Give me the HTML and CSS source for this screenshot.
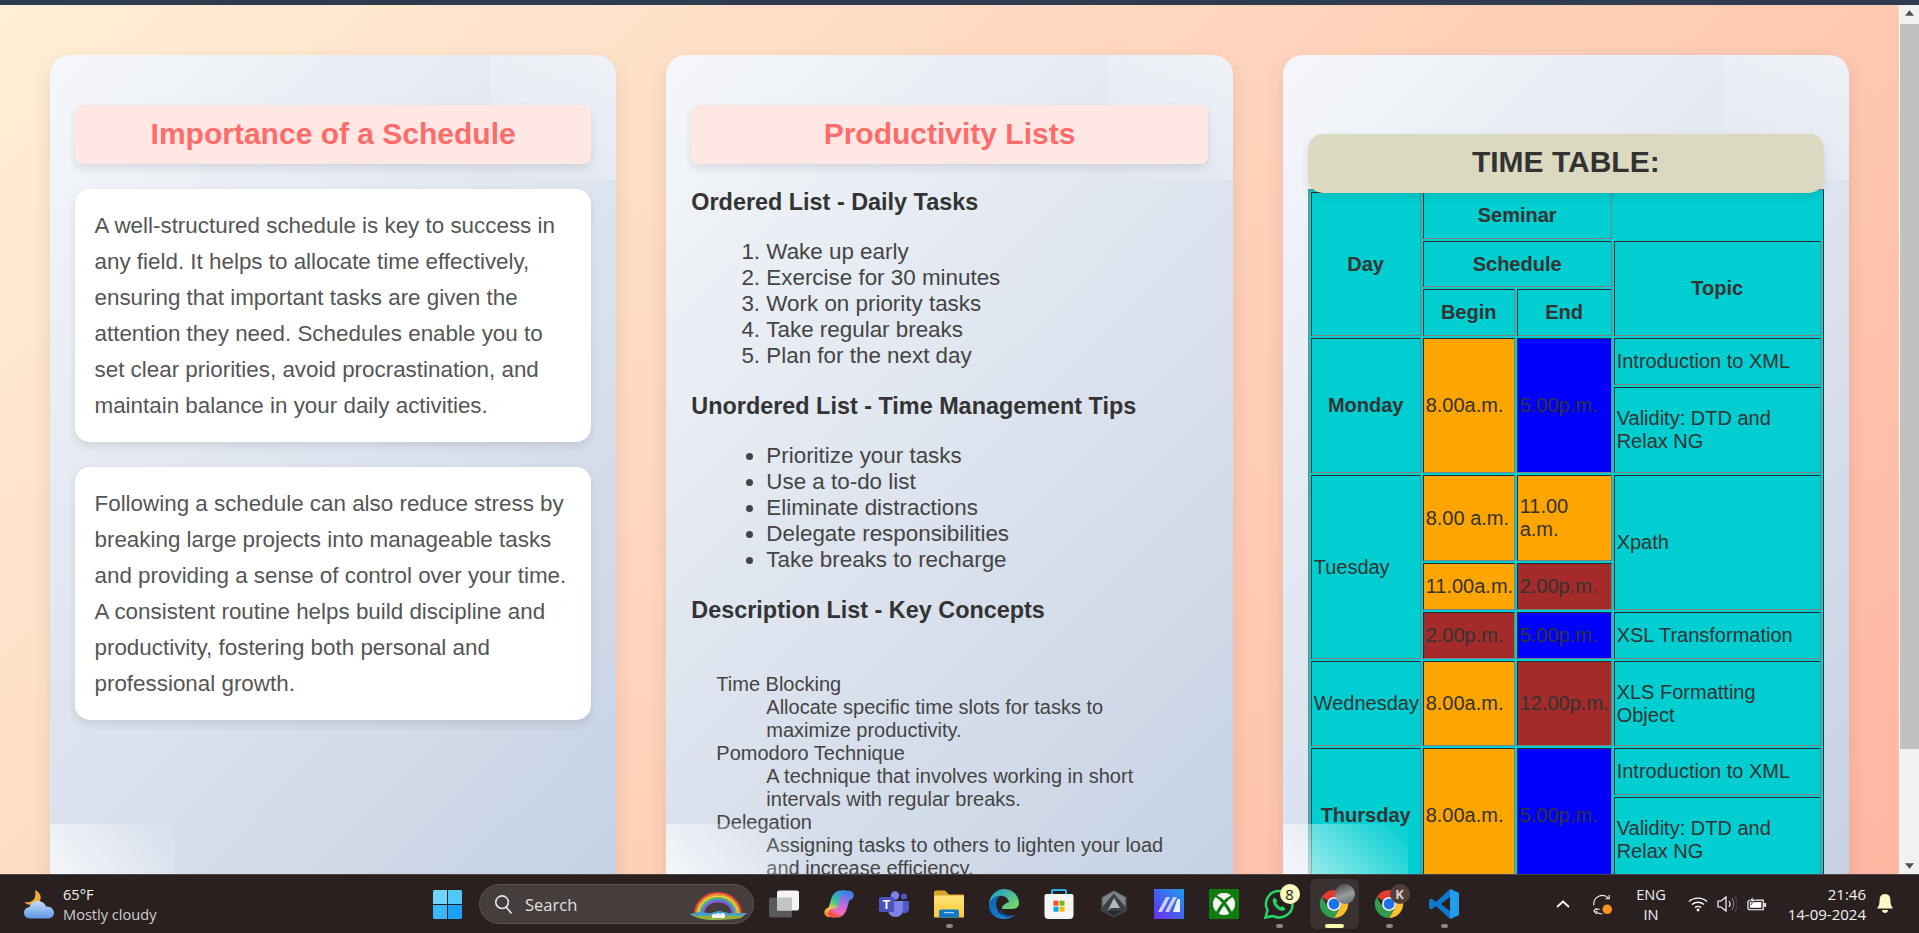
FILE: index.html
```html
<!DOCTYPE html>
<html lang="en">
<head>
    <meta charset="UTF-8">
    <meta name="viewport" content="width=device-width, initial-scale=1.0">
    <title>Schedule</title>
    <link rel="stylesheet" href="styles.css">
</head>
<body>
    <div class="top-bar"></div>

    <div class="window">
        <main class="page">
            <!-- Importance -->
            <section class="card">
                <h2 class="card-title">Importance of a Schedule</h2>
                <p class="note">A well-structured schedule is key to success in any field. It helps to allocate time effectively, ensuring that important tasks are given the attention they need. Schedules enable you to set clear priorities, avoid procrastination, and maintain balance in your daily activities.</p>
                <p class="note">Following a schedule can also reduce stress by breaking large projects into manageable tasks and providing a sense of control over your time. A consistent routine helps build discipline and productivity, fostering both personal and professional growth.</p>
            </section>

            <!-- Lists -->
            <section class="card">
                <h2 class="card-title">Productivity Lists</h2>
                <h3 class="list-title">Ordered List - Daily Tasks</h3>
                <ol class="list">
                    <li>Wake up early</li>
                    <li>Exercise for 30 minutes</li>
                    <li>Work on priority tasks</li>
                    <li>Take regular breaks</li>
                    <li>Plan for the next day</li>
                </ol>
                <h3 class="list-title">Unordered List - Time Management Tips</h3>
                <ul class="list">
                    <li>Prioritize your tasks</li>
                    <li>Use a to-do list</li>
                    <li>Eliminate distractions</li>
                    <li>Delegate responsibilities</li>
                    <li>Take breaks to recharge</li>
                </ul>
                <h3 class="list-title">Description List - Key Concepts</h3>
                <dl class="terms">
                    <dt>Time Blocking</dt>
                    <dd>Allocate specific time slots for tasks to maximize productivity.</dd>
                    <dt>Pomodoro Technique</dt>
                    <dd>A technique that involves working in short intervals with regular breaks.</dd>
                    <dt>Delegation</dt>
                    <dd>Assigning tasks to others to lighten your load and increase efficiency.</dd>
                </dl>
            </section>

            <!-- Time table -->
            <section class="card card-table">
                <h2 class="table-title">TIME TABLE:</h2>
                <table class="timetable">
                    <colgroup>
                        <col class="col-day">
                        <col class="col-begin">
                        <col class="col-end">
                        <col class="col-topic">
                    </colgroup>
                    <tr class="row-s">
                        <th rowspan="3">Day</th>
                        <th colspan="2">Seminar</th>
                        <td class="blank"></td>
                    </tr>
                    <tr class="row-xs">
                        <th colspan="2">Schedule</th>
                        <th rowspan="2">Topic</th>
                    </tr>
                    <tr class="row-s">
                        <th>Begin</th>
                        <th>End</th>
                    </tr>
                    <tr class="row-s">
                        <th rowspan="2">Monday</th>
                        <td rowspan="2" class="orange">8.00a.m.</td>
                        <td rowspan="2" class="blue">5.00p.m.</td>
                        <td>Introduction to XML</td>
                    </tr>
                    <tr class="row-l">
                        <td>Validity: DTD and Relax NG</td>
                    </tr>
                    <tr class="row-l">
                        <td rowspan="3">Tuesday</td>
                        <td class="orange">8.00 a.m.</td>
                        <td class="orange">11.00 a.m.</td>
                        <td rowspan="2">Xpath</td>
                    </tr>
                    <tr class="row-s">
                        <td class="orange">11.00a.m.</td>
                        <td class="brown">2.00p.m.</td>
                    </tr>
                    <tr class="row-s">
                        <td class="brown">2.00p.m.</td>
                        <td class="blue">5.00p.m.</td>
                        <td>XSL Transformation</td>
                    </tr>
                    <tr class="row-m">
                        <td>Wednesday</td>
                        <td class="orange">8.00a.m.</td>
                        <td class="brown">12.00p.m.</td>
                        <td>XLS Formatting Object</td>
                    </tr>
                    <tr class="row-s">
                        <th rowspan="2">Thursday</th>
                        <td rowspan="2" class="orange">8.00a.m.</td>
                        <td rowspan="2" class="blue">5.00p.m.</td>
                        <td>Introduction to XML</td>
                    </tr>
                    <tr class="row-l">
                        <td>Validity: DTD and Relax NG</td>
                    </tr>
                </table>
            </section>
        </main>

        <!-- Scrollbar -->
        <div class="scrollbar">
            <svg class="arrow" viewBox="0 0 10 6"><path d="M5 0 10 6H0Z"/></svg>
            <div class="thumb"></div>
            <svg class="arrow arrow-down" viewBox="0 0 10 6"><path d="M0 0H10L5 6Z"/></svg>
        </div>
    </div>

    <!-- Taskbar -->
    <footer class="taskbar">
        <div class="weather">
            <svg class="weather-icon" viewBox="0 0 30 29">
                <path d="M11 0C18 3 19 11 12 14 8 15.500 3 15 0 12 5 13 10 11 11 7 11.500 4 11.500 2 11 0Z" fill="#f2a93b"/>
                <path d="M6 28.500C2 28.500 0 25.500 0 23 0 20 2 17.500 5.500 17 7 12 13 9.500 18 12 20 13 21.500 14.500 22 16.500 26.500 16 30 19 30 23 30 26 27.500 28.500 24 28.500Z" fill="url(#cloud)"/>
            </svg>
            <div class="weather-text">
                <span>65°F</span>
                <span>Mostly cloudy</span>
            </div>
        </div>

        <svg class="start" viewBox="0 0 29 29">
            <path d="M0 1.500Q0 0 1.500 0H14V14H0Z" fill="#6fd6fb"/>
            <path d="M15 0H27.500Q29 0 29 1.500V14H15Z" fill="#52c8fa"/>
            <path d="M0 15H14V29H1.500Q0 29 0 27.500Z" fill="#3bb6f8"/>
            <path d="M15 15H29V27.500Q29 29 27.500 29H15Z" fill="#1ba1f5"/>
        </svg>

        <div class="search">
            <svg class="search-icon" viewBox="0 0 20 22" fill="none" stroke="#e8e8e8" stroke-width="1.800">
                <circle cx="9" cy="9" r="7"/>
                <path d="M14 15l5 6" stroke-linecap="round"/>
            </svg>
            <span>Search</span>
            <svg class="rainbow" viewBox="0 0 58 32" fill="none" stroke-width="1.800">
                <path d="M5 26A23 21 0 0 1 51 26" stroke="#e8443a"/>
                <path d="M6.700 26A21.300 19.300 0 0 1 49.300 26" stroke="#f59a2e"/>
                <path d="M8.400 26A19.600 17.600 0 0 1 47.600 26" stroke="#f4d84a"/>
                <path d="M10.100 26A17.900 15.900 0 0 1 45.900 26" stroke="#62c456"/>
                <path d="M11.800 26A16.200 14.200 0 0 1 44.200 26" stroke="#4a8fe8"/>
                <path d="M13.500 26A14.500 12.500 0 0 1 42.500 26" stroke="#8f55d8"/>
                <path d="M0 26 10 24 20 25.500 29 23 40 25.500 57 25 51 30Q40 32 20 32 6 31 0 26Z" fill="#8eb03c" stroke="none"/>
                <path d="M0 26 10 24 20 25.500 29 23 40 25.500 57 25 54 27.500H3Z" fill="#3f9be0" stroke="none"/>
                <path d="M22 29a2 2 0 0 1 4-2 2 2 0 0 1 4 0 2 2 0 0 1 5 1 2 2 0 0 1-3 2h-8a1.500 1.500 0 0 1-2-1Z" fill="#f4f4f4" stroke="none"/>
            </svg>
        </div>

        <div class="apps">
            <!-- Task view -->
            <div class="app">
                <svg viewBox="0 0 30 27">
                    <rect x="0" y="7" width="23" height="20" rx="2" fill="#595959"/>
                    <rect x="8" y="0" width="22" height="20" rx="2" fill="#f4f4f4"/>
                    <rect x="8" y="7" width="15" height="13" fill="#c4c4c4"/>
                </svg>
            </div>
            <!-- Copilot -->
            <div class="app">
                <svg viewBox="0 0 30 28" fill="none" stroke-width="9.500" stroke-linecap="round">
                    <path d="M5 22.500C8 22.500 9 20 10 16.500L11.500 11C12.500 7 14.500 5 18 5H21" stroke="url(#copilot-a)"/>
                    <path d="M25 5.500C22 5.500 21 8 20 11.500L18.500 17C17.500 21 15.500 23 12 23H9" stroke="url(#copilot-b)"/>
                </svg>
            </div>
            <!-- Teams -->
            <div class="app">
                <svg viewBox="0 0 30 26">
                    <circle cx="16" cy="4.500" r="4.200" fill="#7b83eb"/>
                    <circle cx="25" cy="5.500" r="3" fill="#5059c9"/>
                    <path d="M21 10H29Q30 10 30 11V17C30 21 27 23 24 22Z" fill="#5059c9"/>
                    <path d="M9 10H24V19C24 23 21 26 16.500 26S9 23 9 19Z" fill="#7b83eb"/>
                    <rect x="0" y="6" width="15" height="15" rx="1.500" fill="#4b53bc"/>
                    <text x="7.500" y="18" class="teams-t">T</text>
                </svg>
            </div>
            <!-- Files -->
            <div class="app app-on">
                <svg viewBox="0 0 30 27">
                    <path d="M0 2Q0 0 2 0H11L15 4H29Q30 4 30 5V8H0Z" fill="#d9a227"/>
                    <rect x="0" y="5" width="30" height="22" rx="1" fill="url(#folder)"/>
                    <path d="M7 19H23Q25 19 25 21V27H5V21Q5 19 7 19Z" fill="#0f78c8"/>
                    <rect x="10" y="21.500" width="10" height="1.200" fill="#9fd5f5"/>
                </svg>
            </div>
            <!-- Edge -->
            <div class="app">
                <svg viewBox="0 0 30 30">
                    <path d="M15 0C24 0 30 7 30 14 30 19 26 20 22 20H13C13 16 17 14 20 13 19 8 14 6 10 7 5 8 1 12 0 16 0 7 7 0 15 0Z" fill="url(#edge-a)"/>
                    <path d="M0 16C1 10 6 7 11 7 7 10 6 15 8 20 10 26 17 29 23 27L26 26C22 29 18 30 15 30 6 30 0 24 0 16Z" fill="url(#edge-b)"/>
                    <path d="M12 20C13 25 18 27 24 26 20 29 16 28 13.500 26 11.500 24 11 22 12 20Z" fill="#0c4f95"/>
                </svg>
            </div>
            <!-- Store -->
            <div class="app">
                <svg viewBox="0 0 29 30">
                    <path d="M7.500 6V1.500Q7.500 1 8.500 1H20.500Q21.500 1 21.500 1.500V6" fill="none" stroke="#2fb0ee" stroke-width="2"/>
                    <path d="M2 5H27Q29 5 29 7V26Q29 30 25 30H4Q0 30 0 26V7Q0 5 2 5Z" fill="#f5f5f5"/>
                    <rect x="9" y="11.700" width="5" height="5" fill="#f25022"/>
                    <rect x="15" y="11.700" width="5" height="5" fill="#7fba00"/>
                    <rect x="9" y="17.700" width="5" height="5" fill="#00a4ef"/>
                    <rect x="15" y="17.700" width="5" height="5" fill="#ffb900"/>
                </svg>
            </div>
            <!-- Hexagon app -->
            <div class="app">
                <svg class="hex" viewBox="0 0 26 28">
                    <path d="M13 0 26 7V21L13 28 0 21V7Z" fill="#3c4044"/>
                    <path d="M13 1 24.500 7.500V17L13 3.500 1.500 17V7.500Z" fill="#80858a"/>
                    <path d="M13 8 19 18H10L6.500 21Z" fill="#b5b8bb"/>
                    <path d="M6.500 21H20L13 25.500Z" fill="#26292c"/>
                </svg>
            </div>
            <!-- Blue M app -->
            <div class="app">
                <svg viewBox="0 0 30 30">
                    <rect width="30" height="30" fill="url(#mapp)"/>
                    <path d="M4 23 12 8H16L8 23ZM11 23 19 8H23L15 23Z" fill="#fff" fill-opacity=".7"/>
                    <path d="M19 23 23.500 10H26V23Z" fill="#fff" fill-opacity=".9"/>
                </svg>
            </div>
            <!-- Xbox -->
            <div class="app">
                <svg viewBox="0 0 30 30">
                    <rect width="30" height="30" rx="1" fill="#107c10"/>
                    <circle cx="15" cy="15" r="11" fill="#f6f6f6"/>
                    <path d="M6 6C11 8 18 17 23 26M24 6C19 8 12 17 7 26" fill="none" stroke="#107c10" stroke-width="3.200"/>
                    <path d="M8 6.500C12 8.500 14 10 15 11.500 16 10 18 8.500 22 6.500 18 3 12 3 8 6.500Z" fill="#f6f6f6"/>
                </svg>
            </div>
            <!-- WhatsApp -->
            <div class="app app-on">
                <svg viewBox="0 0 30 30" fill="none">
                    <path d="M1.500 28.500 3.500 21C-1 12.500 5 2 15 2 22.500 2 28.500 8 28.500 15.500 28.500 25.500 17.500 31.500 9 27Z" stroke="#25d366" stroke-width="2.600"/>
                    <path d="M10.500 8.500C7.500 10.500 8.500 14.500 12 18.500 16 22 19.500 23 21.500 20L18.500 17 16.500 18.200C15 17.500 13 15.500 12.300 13.800L13.500 12Z" fill="#25d366"/>
                </svg>
                <span class="badge badge-count">8</span>
            </div>
            <!-- Chrome -->
            <div class="app app-active">
                <svg viewBox="0 0 32 32"><use href="#chrome"/></svg>
                <span class="badge badge-photo"></span>
            </div>
            <div class="app app-on">
                <svg viewBox="0 0 32 32"><use href="#chrome"/></svg>
                <span class="badge badge-k">K</span>
            </div>
            <!-- VS Code -->
            <div class="app app-on">
                <svg viewBox="0 0 30 30">
                    <path d="M21 0 30 4V26L21 30 7 17 2.500 20.500 0 19V11L2.500 9.500 7 13Z" fill="#0e78c5"/>
                    <path d="M21 8 12 15 21 22Z" fill="#2a2020"/>
                    <path d="M21 0 30 4V26L21 30Z" fill="#1f9cf0"/>
                </svg>
            </div>
        </div>

        <div class="tray">
            <svg class="chevron" viewBox="0 0 14 8" fill="none" stroke="#fff" stroke-width="1.800"><path d="M1 7 7 1.500 13 7"/></svg>
            <svg class="sync" viewBox="0 0 22 22" fill="none" stroke="#eee" stroke-width="1.200">
                <path d="M2 12A9 9 0 0 1 17 4"/>
                <path d="M18 1V5H14"/>
                <path d="M3 16H8"/>
                <path d="M5 21 2 17.500 5 15"/>
                <path d="M4 18A9 9 0 0 0 11 21"/>
                <circle cx="16" cy="16" r="5" fill="#f7931e" stroke="none"/>
            </svg>
            <div class="lang"><span>ENG</span><span>IN</span></div>
            <svg class="wifi" viewBox="0 0 20 16" fill="none" stroke="#fff" stroke-width="1.400">
                <path d="M1 5.500C6 1 14 1 19 5.500"/>
                <path d="M4 8.500C7.500 5.500 12.500 5.500 16 8.500"/>
                <path d="M7 11.500C8.500 10 11.500 10 13 11.500"/>
                <circle cx="10" cy="14" r="1.400" fill="#fff" stroke="none"/>
            </svg>
            <svg class="volume" viewBox="0 0 20 18" fill="none" stroke="#fff" stroke-width="1.200">
                <path d="M1 6V12H4L9 16V2L4 6Z"/>
                <path d="M12 6C13.500 8 13.500 10 12 12"/>
                <path d="M15 3C17.500 7 17.500 11 15 15" stroke="#777"/>
                <path d="M18 1C20.500 6 20.500 12 18 17" stroke="#444"/>
            </svg>
            <svg class="battery" viewBox="0 0 22 16">
                <path d="M4 4H17V14H3Q1 14 1 12V6Q1 4 4 4Z" fill="none" stroke="#fff" stroke-width="1.200"/>
                <rect x="3" y="6" width="12" height="6" fill="#fff"/>
                <rect x="18" y="7" width="2" height="4" fill="#fff"/>
                <path d="M6 0 3 5H6L4 9 9 3H6Z" fill="#fff" stroke="#2a2020" stroke-width=".6"/>
            </svg>
            <div class="clock"><span>21:46</span><span>14-09-2024</span></div>
            <svg class="bell" viewBox="0 0 16 20">
                <path d="M8 0C3 0 2.500 4 2.500 8 2.500 11 1 13 0 14.500H16C15 13 13.500 11 13.500 8 13.500 4 13 0 8 0Z" fill="#fbf8c8"/>
                <path d="M5 16H11C11 20 5 20 5 16Z" fill="#fbf8c8"/>
            </svg>
        </div>
    </footer>

    <!-- Shared gradients and the chrome icon -->
    <svg class="defs" width="0" height="0">
        <defs>
            <linearGradient id="cloud" x1="0" y1="0" x2="0" y2="1">
                <stop offset="0" stop-color="#c4def8"/>
                <stop offset="1" stop-color="#5f97e6"/>
            </linearGradient>
            <linearGradient id="folder" x1="0" y1="0" x2="0" y2="1">
                <stop offset="0" stop-color="#fde27a"/>
                <stop offset="1" stop-color="#fbc833"/>
            </linearGradient>
            <linearGradient id="copilot-a" gradientUnits="userSpaceOnUse" x1="18" y1="2" x2="6" y2="26">
                <stop offset="0" stop-color="#2f8fe8"/>
                <stop offset=".45" stop-color="#3fc48a"/>
                <stop offset=".75" stop-color="#f2d648"/>
                <stop offset="1" stop-color="#f0843c"/>
            </linearGradient>
            <linearGradient id="copilot-b" gradientUnits="userSpaceOnUse" x1="24" y1="2" x2="10" y2="26">
                <stop offset="0" stop-color="#3a7fe8"/>
                <stop offset=".45" stop-color="#b46ae6"/>
                <stop offset=".8" stop-color="#f06cb8"/>
                <stop offset="1" stop-color="#f0503c"/>
            </linearGradient>
            <linearGradient id="edge-a" x1="0" y1="0" x2="1" y2="1">
                <stop offset="0" stop-color="#1a9ad8"/>
                <stop offset="1" stop-color="#7fdc5c"/>
            </linearGradient>
            <linearGradient id="edge-b" x1="0" y1="0" x2="1" y2="1">
                <stop offset="0" stop-color="#0b5cad"/>
                <stop offset="1" stop-color="#1b8fe0"/>
            </linearGradient>
            <linearGradient id="mapp" x1="1" y1="0" x2="0" y2="1">
                <stop offset="0" stop-color="#1a9cf0"/>
                <stop offset="1" stop-color="#6a2cf0"/>
            </linearGradient>
            <symbol id="chrome" viewBox="0 0 32 32">
                <path d="M3 8.500A15 15 0 0 1 29 8.500H16A7.500 7.500 0 0 0 9.500 12.250Z" fill="#e33b2e"/>
                <path d="M29 8.500A15 15 0 0 1 16 31L22.500 19.750A7.500 7.500 0 0 0 16 8.500Z" fill="#fbc02d"/>
                <path d="M16 31A15 15 0 0 1 3 8.500L9.500 19.750A7.500 7.500 0 0 0 22.500 19.750Z" fill="#2e9e4f"/>
                <circle cx="16" cy="16" r="7.500" fill="#fff"/>
                <circle cx="16" cy="16" r="5.800" fill="#1a73e8"/>
            </symbol>
        </defs>
    </svg>
</body>
</html>
```

FILE: styles.css
```css
* {
    box-sizing: border-box;
}

html, body {
    margin: 0;
    height: 100%;
}

body {
    display: flex;
    flex-direction: column;
    overflow: hidden;
    font-family: "Liberation Sans", Arial, sans-serif;
    color: #333;
}

.top-bar {
    height: 5px;
    background-color: #2f3b4e;
    flex: none;
}

.window {
    display: flex;
    flex: 1;
    min-height: 0;
}

.page {
    flex: 1;
    min-width: 0;
    display: grid;
    grid-template-columns: repeat(3, 1fr);
    gap: 50px;
    align-items: start;
    padding: 50px;
    overflow: hidden;
    background: linear-gradient(135deg, #ffefd5, #ffb6a0);
}

/* Cards */
.card {
    position: relative;
    height: 894px;
    padding: 50px 25px 25px;
    border-radius: 20px;
    background: linear-gradient(135deg, #f5f7fa, #c3cfe2);
    box-shadow: 0 8px 20px rgba(0, 0, 0, 0.1);
    overflow: hidden;
}

.card::before,
.card::after {
    content: "";
    position: absolute;
    width: 125px;
    height: 125px;
    pointer-events: none;
}

.card::before {
    top: 0;
    right: 0;
    background: linear-gradient(225deg, rgba(255, 255, 255, 0.45), rgba(255, 255, 255, 0));
}

.card::after {
    bottom: 0;
    left: 0;
    z-index: 3;
    background: linear-gradient(45deg, rgba(255, 255, 255, 1), rgba(255, 255, 255, 0));
}

.card-title {
    position: relative;
    margin: 0 0 25px;
    padding: 12px 10px 14px;
    font-size: 30px;
    line-height: 33px;
    text-align: center;
    color: #ff6b6b;
    background-color: #ffe8e3;
    border-radius: 8px;
    box-shadow: 0 4px 10px rgba(0, 0, 0, 0.1);
}

.note {
    margin: 0 0 25px;
    padding: 18.5px 20px 18.5px 19.5px;
    font-size: 22.4px;
    line-height: 36px;
    color: #555;
    background-color: #fff;
    border-radius: 15px;
    box-shadow: 0 4px 10px rgba(0, 0, 0, 0.1);
}

/* Lists */
.list-title {
    margin: 0 0 23px;
    font-size: 23.4px;
    line-height: 27px;
    color: #333;
}

.list {
    margin: 0 0 24px;
    padding-left: 75px;
    font-size: 22.4px;
    color: #444;
}

.terms {
    margin: 49px 25px 0;
    font-size: 20px;
    color: #444;
}

.terms dd {
    margin-left: 50px;
}

/* Time table */
.card-table {
    padding-top: 79px;
}

.table-title {
    position: relative;
    z-index: 2;
    margin: 0 0 -4px;
    padding: 12px 10px 16px;
    font-size: 30px;
    line-height: 31px;
    text-align: center;
    background-color: #dbd9bf;
    border-radius: 15px;
    box-shadow: 0 4px 10px rgba(0, 0, 0, 0.1);
}

.timetable {
    position: relative;
    width: 516px;
    table-layout: fixed;
    border-collapse: separate;
    border-spacing: 2px;
    border: 1px outset #808080;
    background-color: #00ced1;
    font-size: 20px;
}

.col-day { width: 110px; }
.col-begin { width: 92px; }
.col-end { width: 95px; }
.col-topic { width: auto; }

.timetable th,
.timetable td {
    padding: 2px;
    border: 1px inset #808080;
    background-color: #00ced1;
}

.timetable td.blank {
    border: none;
}

.row-xs { height: 46px; }
.row-s { height: 47px; }
.row-m { height: 85px; }
.row-l { height: 86px; }

.timetable td.orange { background-color: orange; }
.timetable td.blue { background-color: blue; }
.timetable td.brown { background-color: brown; }

/* Scrollbar */
.scrollbar {
    display: flex;
    flex-direction: column;
    align-items: center;
    width: 20px;
    flex: none;
    padding: 5px 0;
    background-color: #f1f1f1;
    border-left: 1px solid #fff;
}

.arrow {
    width: 9px;
    height: 6px;
    flex: none;
    fill: #505050;
}

.thumb {
    width: 100%;
    height: 725px;
    margin-top: 8px;
    background-color: #c1c1c1;
}

.arrow-down {
    margin-top: auto;
}

/* Taskbar */
.taskbar {
    display: flex;
    align-items: center;
    height: 59px;
    flex: none;
    padding-left: 24px;
    background-color: #2a2020;
    border-top: 1px solid #4a4444;
    color: #f2f2f2;
    font-family: "Open Sans", sans-serif;
}

.weather {
    display: flex;
    align-items: center;
    gap: 9px;
    width: 409px;
    flex: none;
}

.weather-icon {
    width: 30px;
    height: 29px;
}

.weather-text {
    display: flex;
    flex-direction: column;
    font-size: 14.6px;
    line-height: 20px;
}

.weather-text span:last-child {
    color: #d0cccc;
}

.start {
    width: 29px;
    height: 29px;
    flex: none;
}

.search {
    display: flex;
    align-items: center;
    width: 275px;
    height: 40px;
    margin-left: 17px;
    padding-left: 14px;
    flex: none;
    background-color: #463d3d;
    border: 1px solid #5a5252;
    border-radius: 20px;
    font-size: 16.5px;
    color: #e4e0e0;
}

.search-icon {
    width: 18px;
    height: 20px;
}

.search span {
    margin-left: 13px;
}

.rainbow {
    width: 58px;
    height: 32px;
    margin-left: auto;
    margin-right: 5px;
}

.apps {
    display: flex;
    margin-left: 2.5px;
    flex: none;
}

.app {
    position: relative;
    display: flex;
    align-items: center;
    justify-content: center;
    width: 55px;
    height: 50px;
    flex: none;
}

.app svg {
    width: 30px;
    height: 30px;
}

.app .hex {
    width: 26px;
    height: 28px;
}

.app-on::after,
.app-active::after {
    content: "";
    position: absolute;
    bottom: 1px;
    left: 24px;
    width: 7px;
    height: 4px;
    border-radius: 2px;
    background-color: #8a8686;
}

.app-active {
    background-color: #3a3131;
    background-clip: padding-box;
    border-left: 3px solid transparent;
    border-right: 3px solid transparent;
    border-radius: 8px;
}

.app-active::after {
    left: 15px;
    width: 19px;
    background-color: #fbf8b0;
}

.badge {
    position: absolute;
    top: 5px;
    left: 28px;
    width: 20px;
    height: 20px;
    border-radius: 50%;
    font-size: 15px;
    line-height: 20px;
    text-align: center;
}

.badge-count {
    background-color: #fbfbc0;
    color: #222;
}

.badge-photo {
    left: 25px;
    background: linear-gradient(160deg, #3c4046, #9a9c9e 55%, #60646a);
}

.badge-k {
    background-color: #54403a;
    color: #d8d0cc;
    font-size: 13px;
    font-weight: 700;
}

.teams-t {
    font-family: "Liberation Sans", sans-serif;
    font-size: 12px;
    font-weight: 700;
    text-anchor: middle;
    fill: #fff;
}

.tray {
    display: flex;
    align-items: center;
    flex: none;
}

.chevron {
    width: 14px;
    height: 8px;
    margin-left: 84.5px;
}

.sync {
    width: 21px;
    height: 21px;
    margin-left: 21.5px;
}

.lang {
    display: flex;
    flex-direction: column;
    align-items: center;
    width: 34px;
    margin-left: 21.5px;
    font-size: 14.6px;
    line-height: 20px;
}

.wifi {
    width: 20px;
    height: 16px;
    margin-left: 20px;
}

.volume {
    width: 20px;
    height: 18px;
    margin-left: 9px;
}

.battery {
    width: 21px;
    height: 16px;
    margin-left: 9.5px;
}

.clock {
    display: flex;
    flex-direction: column;
    align-items: flex-end;
    width: 98.5px;
    font-size: 15px;
    line-height: 20px;
}

.bell {
    width: 16px;
    height: 20px;
    margin-left: 11px;
}

.defs {
    position: absolute;
}
```
